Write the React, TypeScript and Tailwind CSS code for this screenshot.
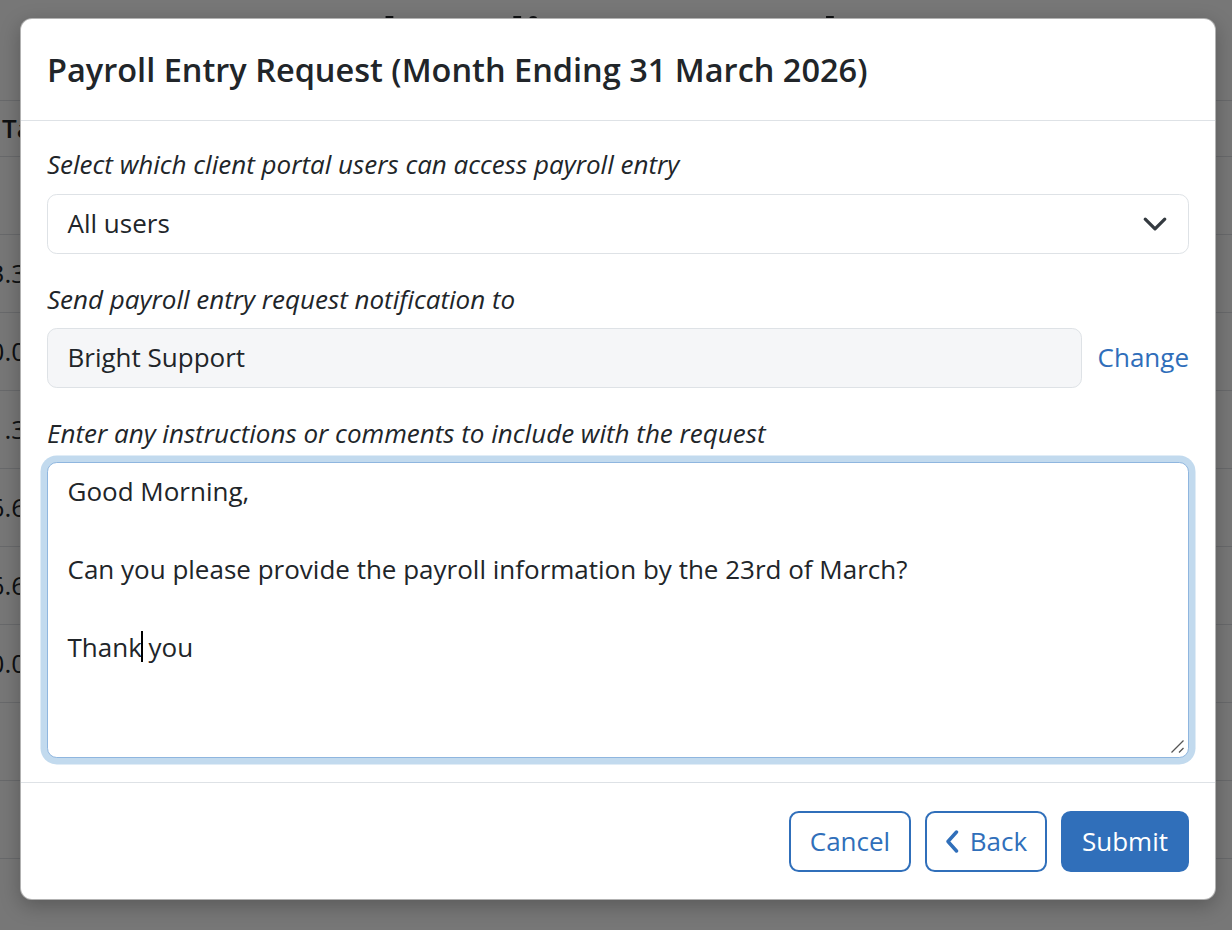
import React from "react";

const rows = [
  { v: "", h: 78 },
  { v: "13.33", h: 78 },
  { v: "10.00", h: 78 },
  { v: "1.33", h: 78 },
  { v: "16.67", h: 78 },
  { v: "16.67", h: 78 },
  { v: "10.00", h: 78 },
  { v: "", h: 78 },
  { v: "", h: 78 },
];

export default function App() {
  return (
    <div
      className="relative h-[930px] w-[1232px] overflow-hidden bg-white text-[#212529]"
      style={{ fontFamily: '"Open Sans", "Noto Sans", sans-serif' }}
    >
      {/* background page */}
      <div className="flex flex-col">
        <h1 className="mt-[10px] h-[90px] text-center text-[52px] font-bold leading-none">
          Month Ending 31 March 2026
        </h1>
        <div className="flex h-[57px] items-center border-y border-[#dee2e6] pl-[2px] text-[26px] font-semibold">
          Tax
        </div>
        {rows.map((r, i) => (
          <div key={i} className="flex h-[78px] items-center border-b border-[#dee2e6] text-[26px]">
            <div className="-ml-[53px] w-[94px] shrink-0 whitespace-nowrap text-right">{r.v}</div>
          </div>
        ))}
      </div>

      {/* backdrop */}
      <div className="absolute inset-0 bg-black/[0.533]" />

      {/* modal */}
      <div className="absolute inset-0 flex justify-start pl-[20px] pt-[18px]">
        <div className="flex h-[882px] w-[1196px] flex-col rounded-[12px] border border-black/30 bg-white shadow-[0_6px_20px_rgba(0,0,0,0.25)]">
          <div className="flex h-[102px] shrink-0 items-center border-b-[1.6px] border-[#dee2e6] px-[26px]">
            <h5 className="text-[32.5px] font-semibold leading-[1.2]">
              Payroll Entry Request (Month Ending 31 March 2026)
            </h5>
          </div>

          <div className="flex flex-1 flex-col px-[26px] pt-[24px]">
            <label className="mb-[9.5px] block text-[26px] italic leading-[39px]">
              Select which client portal users can access payroll entry
            </label>
            <div className="flex h-[60px] items-center justify-between rounded-[9.75px] border-[1.6px] border-[#dee2e6] bg-white pl-[19.5px] pr-[20px] text-[26px] leading-[39px]">
              <span>All users</span>
              <svg width="26" height="26" viewBox="0 0 16 16" fill="none">
                <path d="m2 5 6 6 6-6" stroke="#343a40" strokeWidth="2" strokeLinecap="round" strokeLinejoin="round" />
              </svg>
            </div>

            <label className="mb-[9px] mt-[26px] block text-[26px] italic leading-[39px]">
              Send payroll entry request notification to
            </label>
            <div className="flex items-center gap-[16px]">
              <div className="flex h-[60px] flex-1 items-center rounded-[9.75px] border-[1.6px] border-[#dee2e6] bg-[#f5f6f8] px-[19.5px] text-[26px] leading-[39px]">
                Bright Support
              </div>
              <a className="text-[26px] leading-[39px] text-[#2f6eba]">Change</a>
            </div>

            <label className="mb-[9px] mt-[26px] block text-[26px] italic leading-[39px]">
              Enter any instructions or comments to include with the request
            </label>
            <div className="relative h-[296px] rounded-[9.75px] border-[1.6px] border-[#8fb6df] bg-white px-[19.5px] py-[9.75px] text-[26px] leading-[39px] shadow-[0_0_0_6.5px_#c2daee]">
              <div className="whitespace-pre-wrap">
                {"Good Morning,\n\nCan you please provide the payroll information by the 23rd of March?\n\nThank"}
                <span className="-mx-[1px] inline-block h-[31px] w-[2px] bg-black align-[-5px]" />
                {" you"}
              </div>
              <svg className="absolute bottom-[3px] right-[3px]" width="15" height="15" viewBox="0 0 15 15" fill="none">
                <path d="M1.5 13.5 13.5 1.5M9 13.5 13.5 9" stroke="#555" strokeWidth="1.3" />
              </svg>
            </div>
          </div>

          <div className="flex h-[117px] shrink-0 items-center justify-end gap-[14px] border-t-[1.6px] border-[#dee2e6] px-[26px]">
            <button className="flex h-[61px] w-[122px] items-center justify-center rounded-[9.75px] border-2 border-[#306fba] bg-white text-[26px] text-[#306fba]">
              Cancel
            </button>
            <button className="flex h-[61px] w-[122px] items-center justify-center gap-[11px] rounded-[9.75px] border-2 border-[#306fba] bg-white text-[26px] text-[#306fba]">
              <svg width="14" height="23" viewBox="0 0 14 23" fill="none">
                <path d="M11.5 2 3 11.5 11.5 21" stroke="#306fba" strokeWidth="3.4" strokeLinecap="round" strokeLinejoin="round" />
              </svg>
              <span>Back</span>
            </button>
            <button className="flex h-[61px] w-[128px] items-center justify-center rounded-[9.75px] border-2 border-[#306fba] bg-[#306fba] text-[26px] text-white">
              Submit
            </button>
          </div>
        </div>
      </div>
    </div>
  );
}
